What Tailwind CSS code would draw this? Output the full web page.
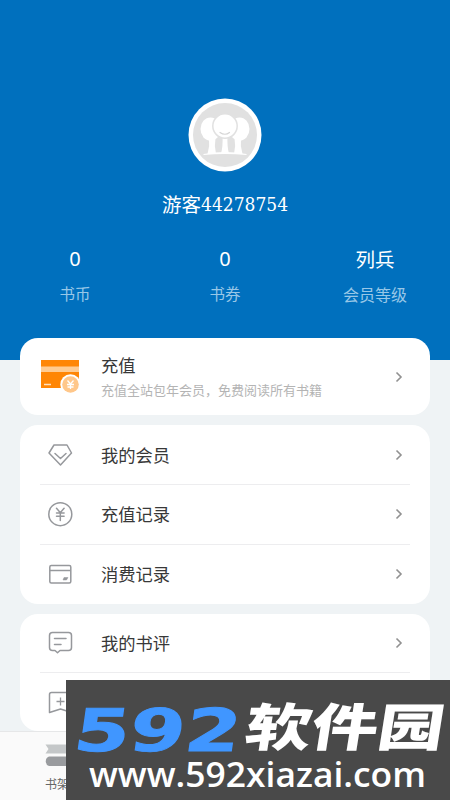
<!DOCTYPE html>
<html lang="zh-CN">
<head>
<meta charset="utf-8">
<title>我的</title>
<script src="https://cdn.jsdelivr.net/npm/@tailwindcss/browser@4"></script>
</head>
<body class="overflow-hidden">
<div class="relative w-[450px] h-[800px] overflow-hidden bg-[#eff3f5] flex flex-col font-['Noto_Sans_CJK_SC',sans-serif]">
  <header class="h-[360px] shrink-0 bg-[#0070be] text-white flex flex-col items-center pt-[98px]">
    <svg class="size-[74px] shrink-0" viewBox="0 0 74 74">
      <circle cx="37" cy="37" r="36.500" fill="#fff"/>
      <circle cx="37" cy="37" r="32" fill="#e1e1e1"/>
      <g fill="#fff">
        <ellipse cx="22.500" cy="31" rx="10" ry="11.500"/>
        <ellipse cx="51.500" cy="31" rx="10" ry="11.500"/>
        <path d="M21 40h6.500q-1.500 8 .5 16h-8.500q2.500-8 1.500-16ZM46.500 40H53q-1 8 1.500 16H46q2-8 .5-16Z"/>
        <path d="M15.500 56q21.500-4 43 0v1q-21.500-2-43 0Z"/>
        <path d="M34.500 38h5q-.5 11 1.500 17.500h-8q2-6.500 1.500-17.500Z"/>
        <circle cx="37" cy="28" r="12.200" stroke="#e1e1e1" stroke-width="1.500"/>
      </g>
      <path d="M32 34.500q5 3.500 9.500 0" fill="none" stroke="#d5d5d5" stroke-width="1.200" stroke-linecap="round"/>
    </svg>
    <div class="mt-[17px] h-[30px] leading-[30px] text-[19.500px] flex"><span>游客</span><span class="text-[19px] font-['DejaVu_Serif_Condensed','DejaVu_Serif',serif] [font-stretch:condensed]">44278754</span></div>
    <div class="mt-[25px] w-full grid grid-cols-3 text-center">
      <div><div class="h-[30px] leading-[30px] text-[20px] font-['Noto_Sans',sans-serif]">0</div><div class="mt-[9px] h-[20px] leading-[20px] text-[15.500px] text-[#98c7e7]">书币</div></div>
      <div><div class="h-[30px] leading-[30px] text-[20px] font-['Noto_Sans',sans-serif]">0</div><div class="mt-[9px] h-[20px] leading-[20px] text-[15.500px] text-[#98c7e7]">书券</div></div>
      <div><div class="h-[30px] leading-[30px] text-[19.500px]">列兵</div><div class="mt-[10px] h-[20px] leading-[20px] text-[16px] text-[#98c7e7]">会员等级</div></div>
    </div>
  </header>

  <main class="-mt-[22px] mx-5 flex flex-col gap-[10px] text-[17.300px] text-[#383838]">
    <section class="h-[77px] shrink-0 bg-white rounded-[18px] flex items-center pl-5 pr-[27px]">
      <svg class="w-[40px] h-[40px] shrink-0" viewBox="0 0 40 40">
        <path d="M1 3h38v28H1Z" fill="#ff8605"/>
        <path d="M1 9.500h38v5.500H1Z" fill="#ffcb91"/>
        <path d="M4 27.500h7" stroke="#ffe0bd" stroke-width="1.500"/>
        <circle cx="30.500" cy="27.500" r="10.200" fill="#fff"/>
        <circle cx="30.500" cy="27.500" r="8.300" fill="#ffc78a"/>
        <path d="m27.500 23.500 3 3.500 3-3.500M27 27.500h7M27.500 30h6M30.500 27v5" fill="none" stroke="#fff" stroke-width="1.300"/>
      </svg>
      <div class="ml-[21px] grow">
        <div class="h-[26px] leading-[26px]">充值</div>
        <div class="h-[22px] leading-[22px] mt-px text-[13px] text-[#b4b4b4]">充值全站包年会员，免费阅读所有书籍</div>
      </div>
      <svg class="w-[8px] h-[12px]" viewBox="0 0 8 12" fill="none" stroke="#919191" stroke-width="1.600"><path d="m1.500 1.500 4.500 4.500-4.500 4.500"/></svg>
    </section>

    <section class="h-[179px] shrink-0 bg-white rounded-[18px] px-5 flex flex-col">
      <div class="h-[60px] flex items-center pr-[7px] border-b border-[#ededef]">
        <svg class="size-[40px]" viewBox="0 0 40 40" fill="none" stroke="#96989c" stroke-width="1.500" stroke-linejoin="round" stroke-linecap="round"><path d="M14 10h13l4.500 8L20.500 30 9 18Z"/><path d="m15 18.500 5.500 5 5.500-5"/></svg>
        <div class="ml-[21px] grow">我的会员</div>
        <svg class="w-[8px] h-[12px]" viewBox="0 0 8 12" fill="none" stroke="#919191" stroke-width="1.600"><path d="m1.500 1.500 4.500 4.500-4.500 4.500"/></svg>
      </div>
      <div class="h-[60px] flex items-center pr-[7px] pb-[2px] border-b border-[#ededef]">
        <svg class="size-[40px]" viewBox="0 0 40 40" fill="none" stroke="#96989c" stroke-width="1.500" stroke-linecap="round"><circle cx="20.300" cy="20.200" r="11.500"/><path d="m16.500 14.200 3.800 4.500 3.800-4.500M16.500 18.900h7.600M16.500 22.200h7.600M20.300 18.900v7.500"/></svg>
        <div class="ml-[21px] grow">充值记录</div>
        <svg class="w-[8px] h-[12px]" viewBox="0 0 8 12" fill="none" stroke="#919191" stroke-width="1.600"><path d="m1.500 1.500 4.500 4.500-4.500 4.500"/></svg>
      </div>
      <div class="h-[59px] flex items-center pr-[7px] pb-[2px]">
        <svg class="size-[40px]" viewBox="0 0 40 40" fill="none" stroke="#96989c" stroke-width="1.500"><rect x="9.800" y="11.500" width="21" height="17.500" rx="1.500"/><path d="M10 16.500h20.500"/><path d="m24 23.500h4l-1.500 2.500h-3.500Z" fill="#96989c" stroke-width=".5"/></svg>
        <div class="ml-[21px] grow">消费记录</div>
        <svg class="w-[8px] h-[12px]" viewBox="0 0 8 12" fill="none" stroke="#919191" stroke-width="1.600"><path d="m1.500 1.500 4.500 4.500-4.500 4.500"/></svg>
      </div>
    </section>

    <section class="h-[117px] shrink-0 bg-white rounded-[18px] px-5 flex flex-col">
      <div class="h-[59px] flex items-center pr-[7px] border-b border-[#ededef]">
        <svg class="size-[40px]" viewBox="0 0 40 40" fill="none" stroke="#96989c" stroke-width="1.500" stroke-linejoin="round" stroke-linecap="round"><path d="M12.500 9.500h16a3 3 0 0 1 3 3v12a3 3 0 0 1-3 3H20l-2.500 2.300L15 27.500h-2.500a3 3 0 0 1-3-3v-12a3 3 0 0 1 3-3Z"/><path d="M14.500 15.500H26M14.500 21.500H21"/></svg>
        <div class="ml-[21px] grow">我的书评</div>
        <svg class="w-[8px] h-[12px]" viewBox="0 0 8 12" fill="none" stroke="#919191" stroke-width="1.600"><path d="m1.500 1.500 4.500 4.500-4.500 4.500"/></svg>
      </div>
      <div class="h-[58px] flex items-center">
        <svg class="size-[40px]" viewBox="0 0 40 40" fill="none" stroke="#96989c" stroke-width="1.500" stroke-linejoin="round"><path d="M11.500 10.500h18a2 2 0 0 1 2 2v18l-11-3.500-11 3.500v-18a2 2 0 0 1 2-2Z"/><path d="M16.500 19.500h8M20.500 15.500v8" stroke-width="1.300"/></svg>
      </div>
    </section>
  </main>

  <nav class="mt-auto h-[69px] shrink-0 bg-[#fafafa] border-t border-[#e6e7e8] pl-[45px] pt-[12px] text-[12px] text-[#666]">
    <svg class="w-[26px] h-[24px]" viewBox="0 0 26 24">
      <path d="M.5 .5H26v9H.5L3.500 5Z" fill="#c4c7c8"/>
      <path d="M4 12.500h22v9.500H4Q.8 21 .8 17.300T4 12.500Z" fill="#999b9e"/>
      <path d="M26 13.500h-3q-3 4 0 8h3Z" fill="#eee"/>
    </svg>
    <div class="mt-[7px] h-[18px] leading-[18px]">书架</div>
  </nav>

  <aside class="absolute left-[66px] top-[680px] w-[384px] h-[120px] bg-[#494949]">
    <svg class="w-[384px] h-[120px]" viewBox="0 0 384 120">
      <g transform="translate(6 70.500) skewX(-8)">
        <text x="0" y="0" transform="scale(1 .98)" textLength="166" lengthAdjust="spacingAndGlyphs" fill="#4096ff" stroke="#4096ff" stroke-width="1" font-family="DejaVu Sans, sans-serif" font-weight="700" font-size="60">592</text>
      </g>
      <g transform="translate(176 70) skewX(-9)">
        <text x="0" y="-4" textLength="199" lengthAdjust="spacingAndGlyphs" fill="#fff" font-family="Noto Sans CJK SC, sans-serif" font-weight="900" font-size="51">软件园</text>
      </g>
      <text x="23" y="107" textLength="337" lengthAdjust="spacingAndGlyphs" fill="#fff" font-family="Open Sans, Noto Sans, sans-serif" font-weight="600" font-size="34">www.592xiazai.com</text>
    </svg>
  </aside>
</div>
</body>
</html>
